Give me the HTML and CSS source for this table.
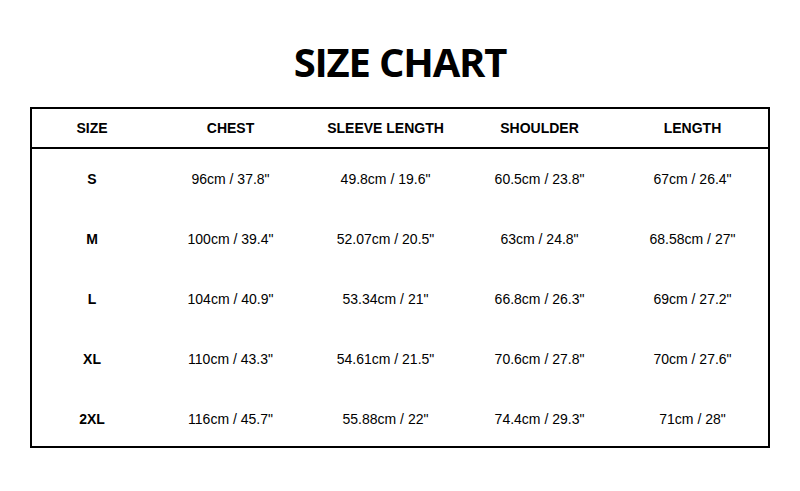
FILE: index.html
```html
<!DOCTYPE html>
<html>
<head>
<meta charset="utf-8">
<link rel="stylesheet" href="styles.css">
</head>
<body>
<h1 class="title">SIZE CHART</h1>
<div class="chart">
  <div class="row head">
    <div>SIZE</div><div>CHEST</div><div>SLEEVE LENGTH</div><div>SHOULDER</div><div>LENGTH</div>
  </div>
  <div class="row">
    <div class="size">S</div><div>96cm / 37.8"</div><div>49.8cm / 19.6"</div><div>60.5cm / 23.8"</div><div>67cm / 26.4"</div>
  </div>
  <div class="row">
    <div class="size">M</div><div>100cm / 39.4"</div><div>52.07cm / 20.5"</div><div>63cm / 24.8"</div><div>68.58cm / 27"</div>
  </div>
  <div class="row">
    <div class="size">L</div><div>104cm / 40.9"</div><div>53.34cm / 21"</div><div>66.8cm / 26.3"</div><div>69cm / 27.2"</div>
  </div>
  <div class="row">
    <div class="size">XL</div><div>110cm / 43.3"</div><div>54.61cm / 21.5"</div><div>70.6cm / 27.8"</div><div>70cm / 27.6"</div>
  </div>
  <div class="row">
    <div class="size">2XL</div><div>116cm / 45.7"</div><div>55.88cm / 22"</div><div>74.4cm / 29.3"</div><div>71cm / 28"</div>
  </div>
</div>
</body>
</html>
```
FILE: styles.css
```css
html, body {
  margin: 0;
  padding: 0;
  background: #fff;
}
body {
  width: 800px;
  height: 491px;
  overflow: hidden;
  font-family: "Liberation Sans", Arial, sans-serif;
  color: #000;
}
.title {
  margin: 0;
  padding-top: 38px;
  height: 107px;
  box-sizing: border-box;
  text-align: center;
  font-family: "Open Sans", sans-serif;
  font-weight: 700;
  font-size: 40px;
  line-height: 48px;
  letter-spacing: -1.2px;
}
.chart {
  margin-left: 30px;
  width: 740px;
  border: 2px solid #000;
  height: 341px;
  box-sizing: border-box;
  overflow: hidden;
}
.row {
  display: grid;
  grid-template-columns: 120px 157px 153px 155px 1fr;
  height: 60px;
  align-items: center;
  font-size: 14px;
}
.row > div {
  text-align: center;
}
.row.head {
  height: 40px;
  box-sizing: border-box;
  border-bottom: 2px solid #000;
  font-weight: 700;
}
.size {
  font-weight: 700;
}
```
